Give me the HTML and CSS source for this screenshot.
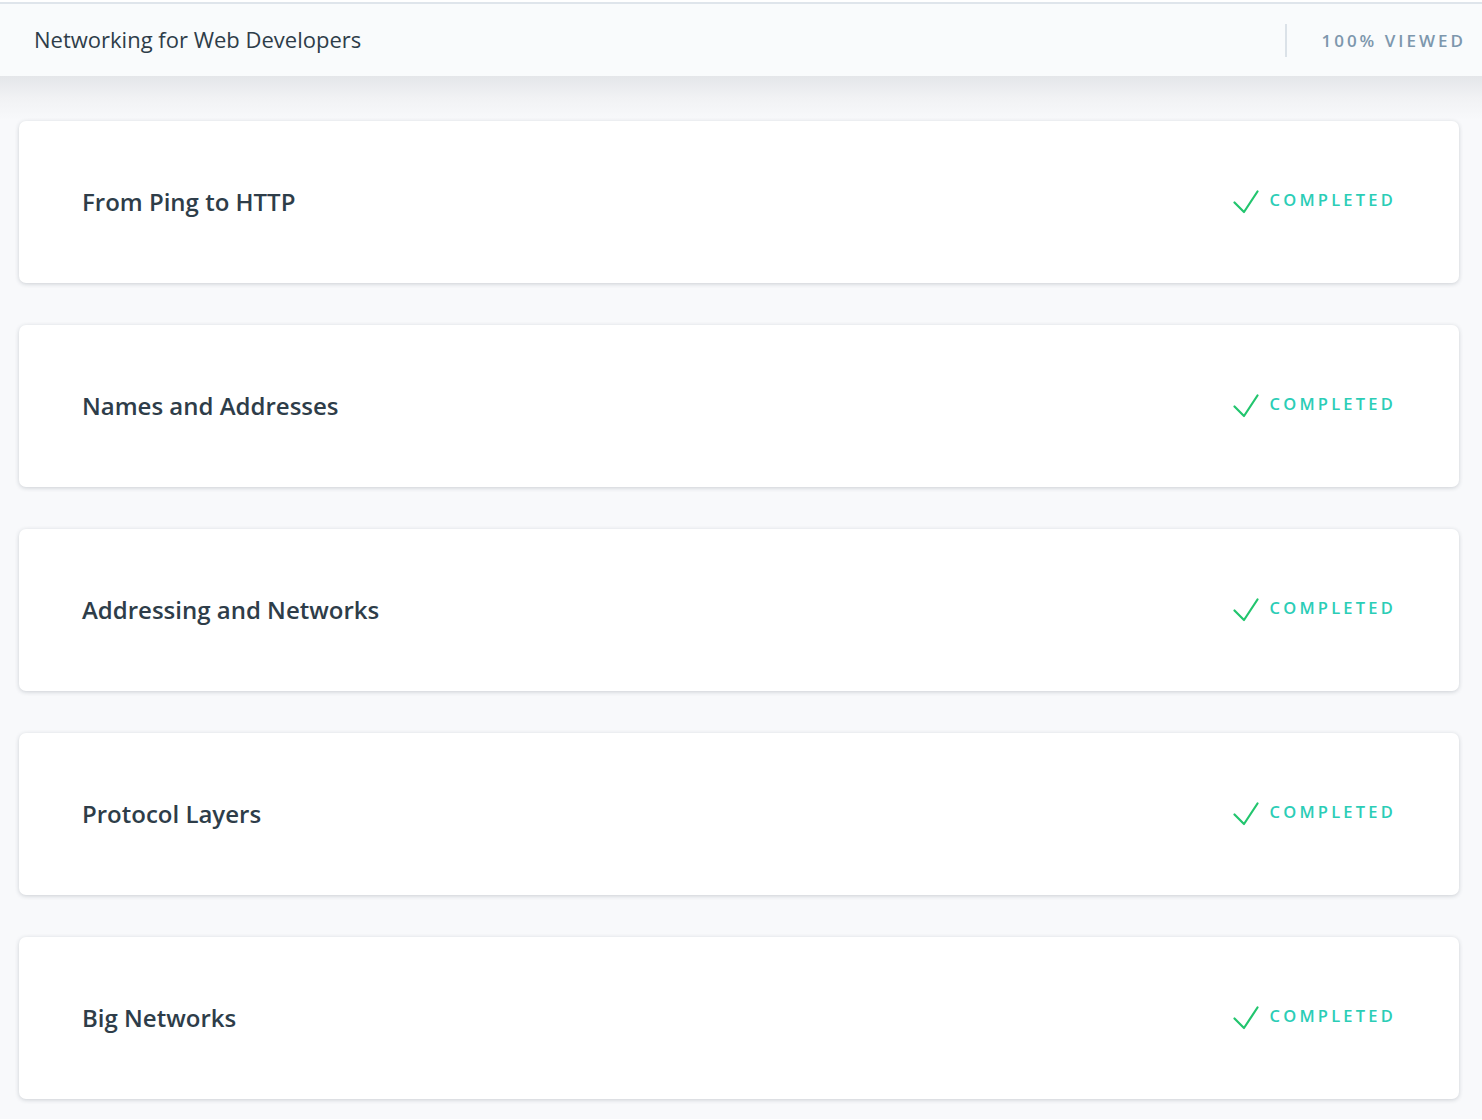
FILE: index.html
```html
<!DOCTYPE html>
<html>
<head>
<meta charset="utf-8">
<link rel="stylesheet" href="styles.css">
</head>
<body>
<div class="page">
  <header class="topbar">
    <div class="course-title">Networking for Web Developers</div>
    <div class="progress">
      <span class="divider"></span>
      <span class="viewed">100% Viewed</span>
    </div>
  </header>
  <main class="lessons">
    <div class="card"><span class="lesson-title">From Ping to HTTP</span><span class="status"><svg class="check" width="26" height="24" viewBox="0 0 26 24"><path d="M1.5 12.5 L11 22 L24.5 1.5" fill="none" stroke="#22c56e" stroke-width="2.2" stroke-linecap="round" stroke-linejoin="round"/></svg><span class="status-text">Completed</span></span></div>
    <div class="card"><span class="lesson-title">Names and Addresses</span><span class="status"><svg class="check" width="26" height="24" viewBox="0 0 26 24"><path d="M1.5 12.5 L11 22 L24.5 1.5" fill="none" stroke="#22c56e" stroke-width="2.2" stroke-linecap="round" stroke-linejoin="round"/></svg><span class="status-text">Completed</span></span></div>
    <div class="card"><span class="lesson-title">Addressing and Networks</span><span class="status"><svg class="check" width="26" height="24" viewBox="0 0 26 24"><path d="M1.5 12.5 L11 22 L24.5 1.5" fill="none" stroke="#22c56e" stroke-width="2.2" stroke-linecap="round" stroke-linejoin="round"/></svg><span class="status-text">Completed</span></span></div>
    <div class="card"><span class="lesson-title">Protocol Layers</span><span class="status"><svg class="check" width="26" height="24" viewBox="0 0 26 24"><path d="M1.5 12.5 L11 22 L24.5 1.5" fill="none" stroke="#22c56e" stroke-width="2.2" stroke-linecap="round" stroke-linejoin="round"/></svg><span class="status-text">Completed</span></span></div>
    <div class="card"><span class="lesson-title">Big Networks</span><span class="status"><svg class="check" width="26" height="24" viewBox="0 0 26 24"><path d="M1.5 12.5 L11 22 L24.5 1.5" fill="none" stroke="#22c56e" stroke-width="2.2" stroke-linecap="round" stroke-linejoin="round"/></svg><span class="status-text">Completed</span></span></div>
  </main>
</div>
</body>
</html>
```
FILE: styles.css
```css
html, body {
  margin: 0;
  padding: 0;
  background: #f8f9fb;
  font-family: "Open Sans", "Noto Sans", sans-serif;
}
.page {
  padding-top: 2px;
  background: #ffffff;
  min-height: 1120px;
  box-sizing: border-box;
}
.topbar {
  position: relative;
  z-index: 2;
  height: 72px;
  border-top: 2px solid #dfe5eb;
  background: #f9fbfc;
  display: flex;
  align-items: center;
  justify-content: space-between;
  padding-left: 34px;
  padding-right: 16px;
}
.course-title {
  font-size: 22px;
  color: #2e3d49;
  margin-top: -2px;
}
.progress {
  display: flex;
  align-items: center;
  height: 100%;
}
.divider {
  width: 2px;
  height: 33px;
  background: #dbe2e8;
  margin-right: 34px;
}
.viewed {
  text-transform: uppercase;
  font-size: 17px;
  font-weight: 600;
  letter-spacing: 3px;
  color: #7d97ad;
}
.lessons {
  background: linear-gradient(#e4e6e9 0px, #f1f2f4 22px, #f8f9fb 44px, #f8f9fb 100%);
  padding: 45px 23px 20px 19px;
  display: flex;
  flex-direction: column;
  gap: 42px;
  min-height: 1000px;
  box-sizing: border-box;
}
.card {
  height: 162px;
  background: #ffffff;
  border-radius: 7px;
  box-shadow: 0 1px 4px rgba(46, 61, 73, 0.22);
  display: flex;
  align-items: center;
  justify-content: space-between;
  padding: 0 66px 0 63px;
}
.lesson-title {
  font-size: 24px;
  font-weight: 600;
  color: #2e3d49;
  margin-top: -2px;
}
.status {
  display: flex;
  align-items: center;
  gap: 11px;
  margin-top: -6px;
}
.check {
  margin-top: 6px;
}
.status-text {
  text-transform: uppercase;
  font-size: 16.5px;
  font-weight: 600;
  letter-spacing: 3.2px;
  color: #2bcdb6;
  margin-right: -3px;
}
```
